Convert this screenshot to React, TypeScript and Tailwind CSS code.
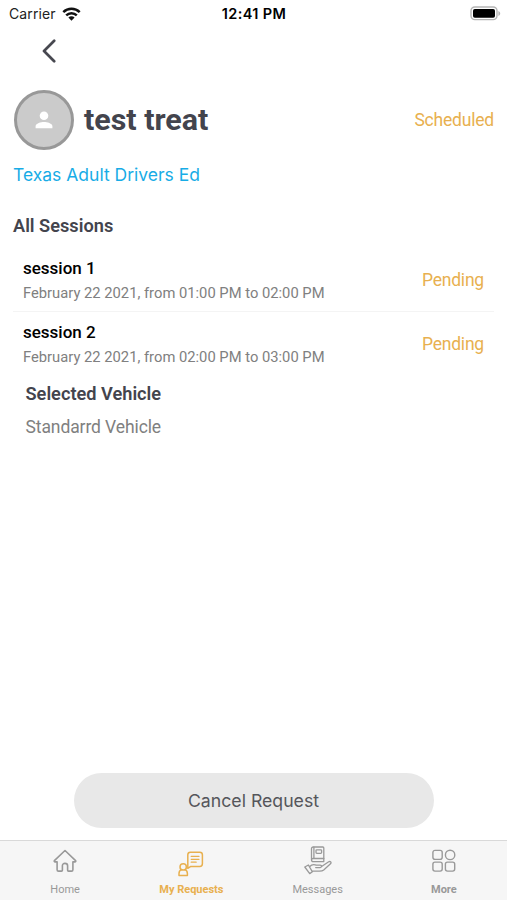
import { FC, ReactElement } from 'react';

interface SessionRowProps {
  title: string;
  date: string;
  status: string;
}

interface TabItemProps {
  icon: ReactElement;
  label: string;
  className: string;
}

const WifiIcon = () => (
  <svg width="19" height="14" viewBox="0 0 19 14" fill="none" stroke="#111" strokeWidth="2.5">
    <path d="M1.3 5.1a11.8 11.8 0 0 1 16.4 0" />
    <path d="M4.2 8.3a7.6 7.6 0 0 1 10.6 0" />
    <path d="M9.5 13.8 6.4 10.6a4.4 4.4 0 0 1 6.2 0z" fill="#111" stroke="none" />
  </svg>
);

const BatteryIcon = () => (
  <svg width="31" height="15" viewBox="0 0 31 15" fill="none">
    <rect x="1" y="1" width="26" height="12.6" rx="3.8" stroke="#b5b5b5" strokeWidth="1.4" />
    <rect x="3" y="3" width="22" height="8.8" rx="1.8" fill="#000" />
    <path d="M28.4 5v5c1.1-.5 1.8-1.4 1.8-2.5S29.5 5.5 28.4 5z" fill="#b5b5b5" />
  </svg>
);

const BackIcon = () => (
  <svg width="14" height="24" viewBox="0 0 14 24" fill="none" stroke="#474850" strokeWidth="2.7" strokeLinecap="round" strokeLinejoin="round">
    <path d="M12.2 1.8 2 12l10.2 10.2" />
  </svg>
);

const PersonIcon = () => (
  <svg width="18" height="18" viewBox="0 0 18 18" fill="#fff">
    <circle cx="9" cy="4.7" r="4.3" />
    <path d="M.6 17.3v-2.2C.6 12.3 6 10.9 9 10.9s8.4 1.4 8.4 4.2v2.2z" />
  </svg>
);

const HomeIcon = () => (
  <svg width="24" height="24" viewBox="0 0 24 24" fill="none" stroke="currentColor" strokeWidth="1.6" strokeLinecap="round" strokeLinejoin="round">
    <path d="M12 1.5 1.4 11.6c-.5.6-.1 1.3.7 1.3h2v7.8c0 .9.5 1.4 1.4 1.4h3c.6 0 .9-.3.9-.9v-4.5c0-1.5 1-2.3 2.6-2.3s2.6.8 2.6 2.3v4.5c0 .6.3.9.9.9h3c.9 0 1.4-.5 1.4-1.4v-7.8h2c.8 0 1.2-.7.7-1.3z" />
  </svg>
);

const RequestsIcon = () => (
  <svg width="26" height="26" viewBox="0 0 26 26" fill="none" stroke="currentColor" strokeWidth="1.5" strokeLinecap="round" strokeLinejoin="round">
    <path d="M12.4 1.2h9.4a2.6 2.6 0 0 1 2.6 2.6v9a2.6 2.6 0 0 1-2.6 2.6h-9L9.8 17.3V3.8a2.6 2.6 0 0 1 2.6-2.6z" />
    <path d="M13.2 5.4H21M13.2 8.3H21M13.2 11.2h5" strokeWidth="1.2" />
    <circle cx="5.2" cy="15.9" r="3.2" />
    <path d="M3.3 18.6C1.6 19.4 1 20.7 1 22.6v1.8h8.4v-1.8c0-1.9-.6-3.2-2.3-4" />
  </svg>
);

const MessagesIcon = () => (
  <svg width="28" height="29" viewBox="0 0 28 29" fill="none" stroke="currentColor" strokeWidth="1.3" strokeLinecap="round" strokeLinejoin="round">
    <path d="M9.2 1h9.6c.6 0 1 .4 1 1v13.6H9.2c-1 0-1.7-.6-1.7-1.6V2.6C7.5 1.6 8.2 1 9.2 1z" />
    <path d="M9.9 1.2v11.3M7.7 13.2c.3-.5.8-.7 1.5-.7h10.6" />
    <rect x="12" y="3.8" width="5.6" height="3.6" rx=".8" />
    <path d="m.8 21 3.6-2 4 6.8-2.7 1.8zM5.5 20.7c2.4-2.5 4.3-2.6 6.8-1.5h3.9c1.8 0 1.8 2.3 0 2.4h-4.5M17.6 20.5l7.1-4.7c1.7-.9 3 .6 1.8 2l-6.8 6.3c-1.2 1-2.5 1.1-4.2 1.1H8.2" />
  </svg>
);

const MoreIcon = () => (
  <svg width="25" height="24" viewBox="0 0 25 24" fill="none" stroke="currentColor" strokeWidth="1.4">
    <rect x="1.9" y="1.4" width="9.3" height="9" rx="2.1" />
    <circle cx="19.1" cy="5.9" r="4.7" />
    <rect x="1.9" y="13.1" width="9.3" height="9" rx="2.1" />
    <rect x="14.4" y="13.1" width="9.3" height="9" rx="2.1" />
  </svg>
);

const SessionRow: FC<SessionRowProps> = ({ title, date, status }) => {
  return (
    <div className="flex items-center justify-between h-[63px] px-[10px]">
      <div className="pt-[2px]">
        <h3 className="text-[17px] leading-[25px] font-medium text-black">{title}</h3>
        <p className="text-[14.75px] leading-[25px] text-[#808080]">{date}</p>
      </div>
      <span className="text-[17.5px] leading-6 tracking-[-0.2px] text-[#e8b04f]">{status}</span>
    </div>
  );
};

const TabItem: FC<TabItemProps> = ({ icon, label, className }) => {
  return (
    <button className={`flex flex-col items-center flex-1 ${className}`}>
      <span className="flex items-end justify-center h-9">{icon}</span>
      <span className="mt-[5px] text-[11px] leading-4 whitespace-nowrap">{label}</span>
    </button>
  );
};

const App: FC = () => {
  return (
    <div className="flex flex-col w-[507px] h-[900px] overflow-hidden bg-white font-['Roboto',sans-serif]">
      {/* Status Bar */}
      <header className="grid grid-cols-3 items-center h-[27px] pl-[9px] pr-[6px] font-['Inter',sans-serif] text-[14px] text-[#222]">
        <div className="flex items-center gap-[6px]">
          <span className="tracking-[0.1px]">Carrier</span>
          <WifiIcon />
        </div>
        <span className="text-center text-[14.5px] tracking-[0.35px] font-semibold text-black -ml-[2px]">12:41 PM</span>
        <div className="flex justify-end">
          <BatteryIcon />
        </div>
      </header>

      {/* Back Button */}
      <nav className="flex items-center h-[47px] pl-[42px]">
        <button aria-label="Back">
          <BackIcon />
        </button>
      </nav>

      <main className="flex flex-col flex-1 px-[13px] pt-4">
        {/* Profile */}
        <div className="flex items-center h-[60px]">
          <div className="flex items-center justify-center size-[60px] ml-[0.5px] rounded-full border-[3px] border-[#989898] bg-[#cbcbcb]">
            <PersonIcon />
          </div>
          <h1 className="ml-[10.5px] text-[30.4px] leading-9 font-bold text-[#43444d]">test treat</h1>
          <span className="ml-auto text-[17.5px] leading-6 tracking-[-0.2px] text-[#e8b04f]">Scheduled</span>
        </div>
        <a className="mt-[13px] font-['Inter',sans-serif] text-[17.5px] leading-6 text-[#17ace6]">Texas Adult Drivers Ed</a>

        {/* Sessions */}
        <h2 className="mt-[27px] text-[18.2px] leading-6 font-semibold text-[#43444d]">All Sessions</h2>
        <div className="mt-[11px] divide-y divide-[#f4f4f4]">
          <SessionRow title="session 1" date="February 22 2021, from 01:00 PM to 02:00 PM" status="Pending" />
          <SessionRow title="session 2" date="February 22 2021, from 02:00 PM to 03:00 PM" status="Pending" />
        </div>

        {/* Vehicle */}
        <div className="mt-[7px] pl-[12.5px]">
          <h2 className="text-[18.2px] leading-6 font-semibold text-[#43444d]">Selected Vehicle</h2>
          <p className="mt-[9px] text-[17.5px] leading-6 tracking-[-0.1px] text-[#808080]">Standarrd Vehicle</p>
        </div>

        <button className="self-center mt-auto mb-[12px] w-[360px] h-[55px] pt-px rounded-full bg-[#e8e8e8] font-['Inter',sans-serif] text-[17.7px] text-[#55565b]">
          Cancel Request
        </button>
      </main>

      {/* Tab Bar */}
      <footer className="flex h-[60px] pl-[2px] border-t border-[#d9d9d9] bg-[#f6f6f6]">
        <TabItem icon={<div className="pb-[4px]"><HomeIcon /></div>} label="Home" className="text-[#999]" />
        <TabItem icon={<RequestsIcon />} label="My Requests" className="text-[#e8b04f] font-bold" />
        <TabItem icon={<div className="pb-[2px]"><MessagesIcon /></div>} label="Messages" className="text-[#999]" />
        <TabItem icon={<div className="pb-[4px]"><MoreIcon /></div>} label="More" className="text-[#999] font-bold" />
      </footer>
    </div>
  );
};

export default App;
